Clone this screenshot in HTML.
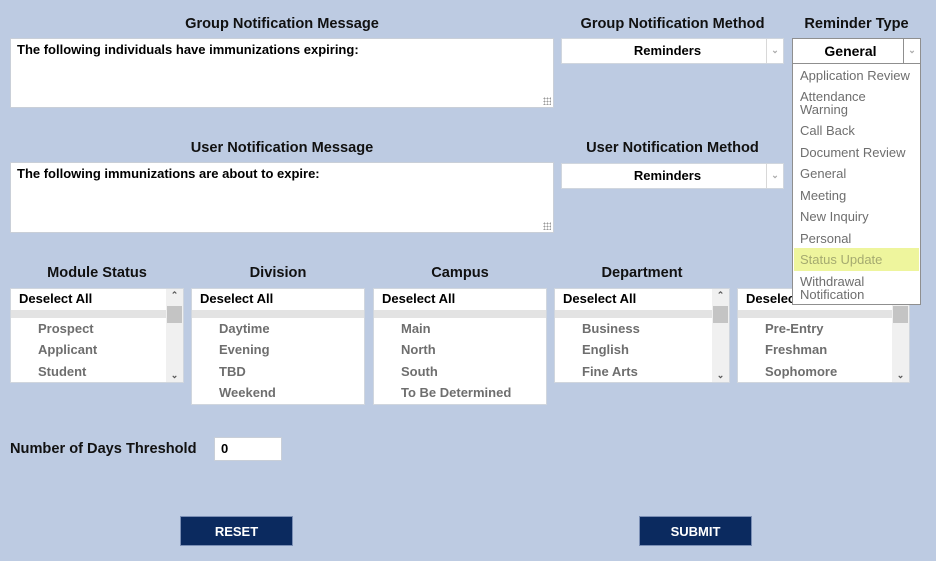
<!DOCTYPE html>
<html><head><style>
body{margin:0;width:936px;height:561px;background:#bdcbe2;font-family:"Liberation Sans",Arial,sans-serif;position:relative;overflow:hidden}
.a{position:absolute}
.lbl{position:absolute;font-weight:bold;font-size:14.6px;color:#111;text-align:center}
.ta{position:absolute;background:#fff;border:1px solid #c9cfd8;box-sizing:border-box;font-weight:bold;font-size:13px;padding:3px 6px;color:#000}
.grip{position:absolute;right:2px;bottom:2px;width:8px;height:8px;background:radial-gradient(circle,#999 0.8px,transparent 1px) 0 0/3px 3px}
.sel{position:absolute;background:#fff;border:1px solid #d0d6de;box-sizing:border-box;font-weight:bold;font-size:13px;text-align:center;line-height:24px}
.sel .ar{position:absolute;right:0;top:0;width:16px;height:100%;border-left:1px solid #d8d8d8;color:#aaa;font-size:9px;line-height:22px;text-align:center}
.lb{position:absolute;background:#fff;border:1px solid #d0d6de;box-sizing:border-box;font-size:13px;font-weight:bold;overflow:hidden}
.lb .h{position:absolute;left:8px;top:2px;color:#000}
.lb .bar{position:absolute;left:0;right:0;top:21px;height:8px;background:#e3e3e3}
.lb .it{position:absolute;left:27px;color:#6e6e6e}
.sb{position:absolute;right:0;top:0;bottom:0;width:17px;background:#f0f0f0}
.sb .th{position:absolute;left:1px;top:17px;width:15px;height:17px;background:#c4c4c4}
.sb .u,.sb .d{position:absolute;left:0;width:17px;text-align:center;font-size:9px;color:#555}
.btn{position:absolute;background:#0b2a5f;color:#fff;font-size:13px;font-weight:bold;text-align:center;line-height:29px;border:1px solid #7b8fb5;box-sizing:border-box}
.dd{position:absolute;left:792px;top:63px;width:129px;height:242px;background:#fff;border:1px solid #8f8f8f;box-sizing:border-box;font-size:13px;color:#6e6e6e}
.dd div{position:absolute;left:7px;line-height:13px}
</style></head><body>
<div class="lbl" style="left:10px;width:544px;top:16px">Group Notification Message</div>
<div class="ta" style="left:10px;top:38px;width:544px;height:70px">The following individuals have immunizations expiring:<div class="grip"></div></div>
<div class="lbl" style="left:10px;width:544px;top:140px">User Notification Message</div>
<div class="ta" style="left:10px;top:162px;width:544px;height:71px">The following immunizations are about to expire:<div class="grip"></div></div>

<div class="lbl" style="left:561px;width:223px;top:16px">Group Notification Method</div>
<div class="sel" style="left:561px;top:38px;width:223px;height:26px"><span style="margin-right:10px">Reminders</span><div class="ar">&#8964;</div></div>
<div class="lbl" style="left:561px;width:223px;top:140px">User Notification Method</div>
<div class="sel" style="left:561px;top:163px;width:223px;height:26px"><span style="margin-right:10px">Reminders</span><div class="ar">&#8964;</div></div>

<div class="lbl" style="left:792px;width:129px;top:16px">Reminder Type</div>
<div class="sel" style="left:792px;top:38px;width:129px;height:26px;border-color:#8f8f8f;font-size:14px"><span style="margin-right:12px">General</span><div class="ar" style="border-left-color:#8f8f8f">&#8964;</div></div>

<div class="lbl" style="left:10px;width:174px;top:265px">Module Status</div>
<div class="lbl" style="left:191px;width:174px;top:265px">Division</div>
<div class="lbl" style="left:373px;width:174px;top:265px">Campus</div>
<div class="lbl" style="left:554px;width:176px;top:265px">Department</div>

<div class="lb" style="left:10px;top:288px;width:174px;height:95px"><div class="h">Deselect All</div><div class="bar"></div>
<div class="it" style="top:32px">Prospect</div><div class="it" style="top:53px">Applicant</div><div class="it" style="top:75px">Student</div>
<div class="sb"><div class="u" style="top:1px">&#8963;</div><div class="th"></div><div class="d" style="bottom:1px">&#8964;</div></div></div>
<div class="lb" style="left:191px;top:288px;width:174px;height:117px"><div class="h">Deselect All</div><div class="bar"></div>
<div class="it" style="top:32px">Daytime</div><div class="it" style="top:53px">Evening</div><div class="it" style="top:75px">TBD</div><div class="it" style="top:96px">Weekend</div></div>
<div class="lb" style="left:373px;top:288px;width:174px;height:117px"><div class="h">Deselect All</div><div class="bar"></div>
<div class="it" style="top:32px">Main</div><div class="it" style="top:53px">North</div><div class="it" style="top:75px">South</div><div class="it" style="top:96px">To Be Determined</div></div>
<div class="lb" style="left:554px;top:288px;width:176px;height:95px"><div class="h">Deselect All</div><div class="bar"></div>
<div class="it" style="top:32px">Business</div><div class="it" style="top:53px">English</div><div class="it" style="top:75px">Fine Arts</div>
<div class="sb"><div class="u" style="top:1px">&#8963;</div><div class="th"></div><div class="d" style="bottom:1px">&#8964;</div></div></div>
<div class="lb" style="left:737px;top:288px;width:173px;height:95px"><div class="h">Deselect All</div><div class="bar"></div>
<div class="it" style="top:32px">Pre-Entry</div><div class="it" style="top:53px">Freshman</div><div class="it" style="top:75px">Sophomore</div>
<div class="sb"><div class="u" style="top:1px">&#8963;</div><div class="th"></div><div class="d" style="bottom:1px">&#8964;</div></div></div>

<div class="dd">
<div style="top:5px">Application Review</div>
<div style="top:26px">Attendance<br>Warning</div>
<div style="top:60px">Call Back</div>
<div style="top:82px">Document Review</div>
<div style="top:103px">General</div>
<div style="top:125px">Meeting</div>
<div style="top:146px">New Inquiry</div>
<div style="top:168px">Personal</div>
<div style="top:184px;left:1px;width:125px;height:23px;background:#eef59d"></div>
<div style="top:189px;color:#a5aa70">Status Update</div>
<div style="top:211px">Withdrawal<br>Notification</div>
</div>

<div class="lbl" style="left:10px;top:441px;text-align:left">Number of Days Threshold</div>
<div class="ta" style="left:214px;top:437px;width:68px;height:24px;padding:3px 6px;font-size:13px">0</div>

<div class="btn" style="left:180px;top:516px;width:113px;height:30px">RESET</div>
<div class="btn" style="left:639px;top:516px;width:113px;height:30px">SUBMIT</div>
</body></html>
